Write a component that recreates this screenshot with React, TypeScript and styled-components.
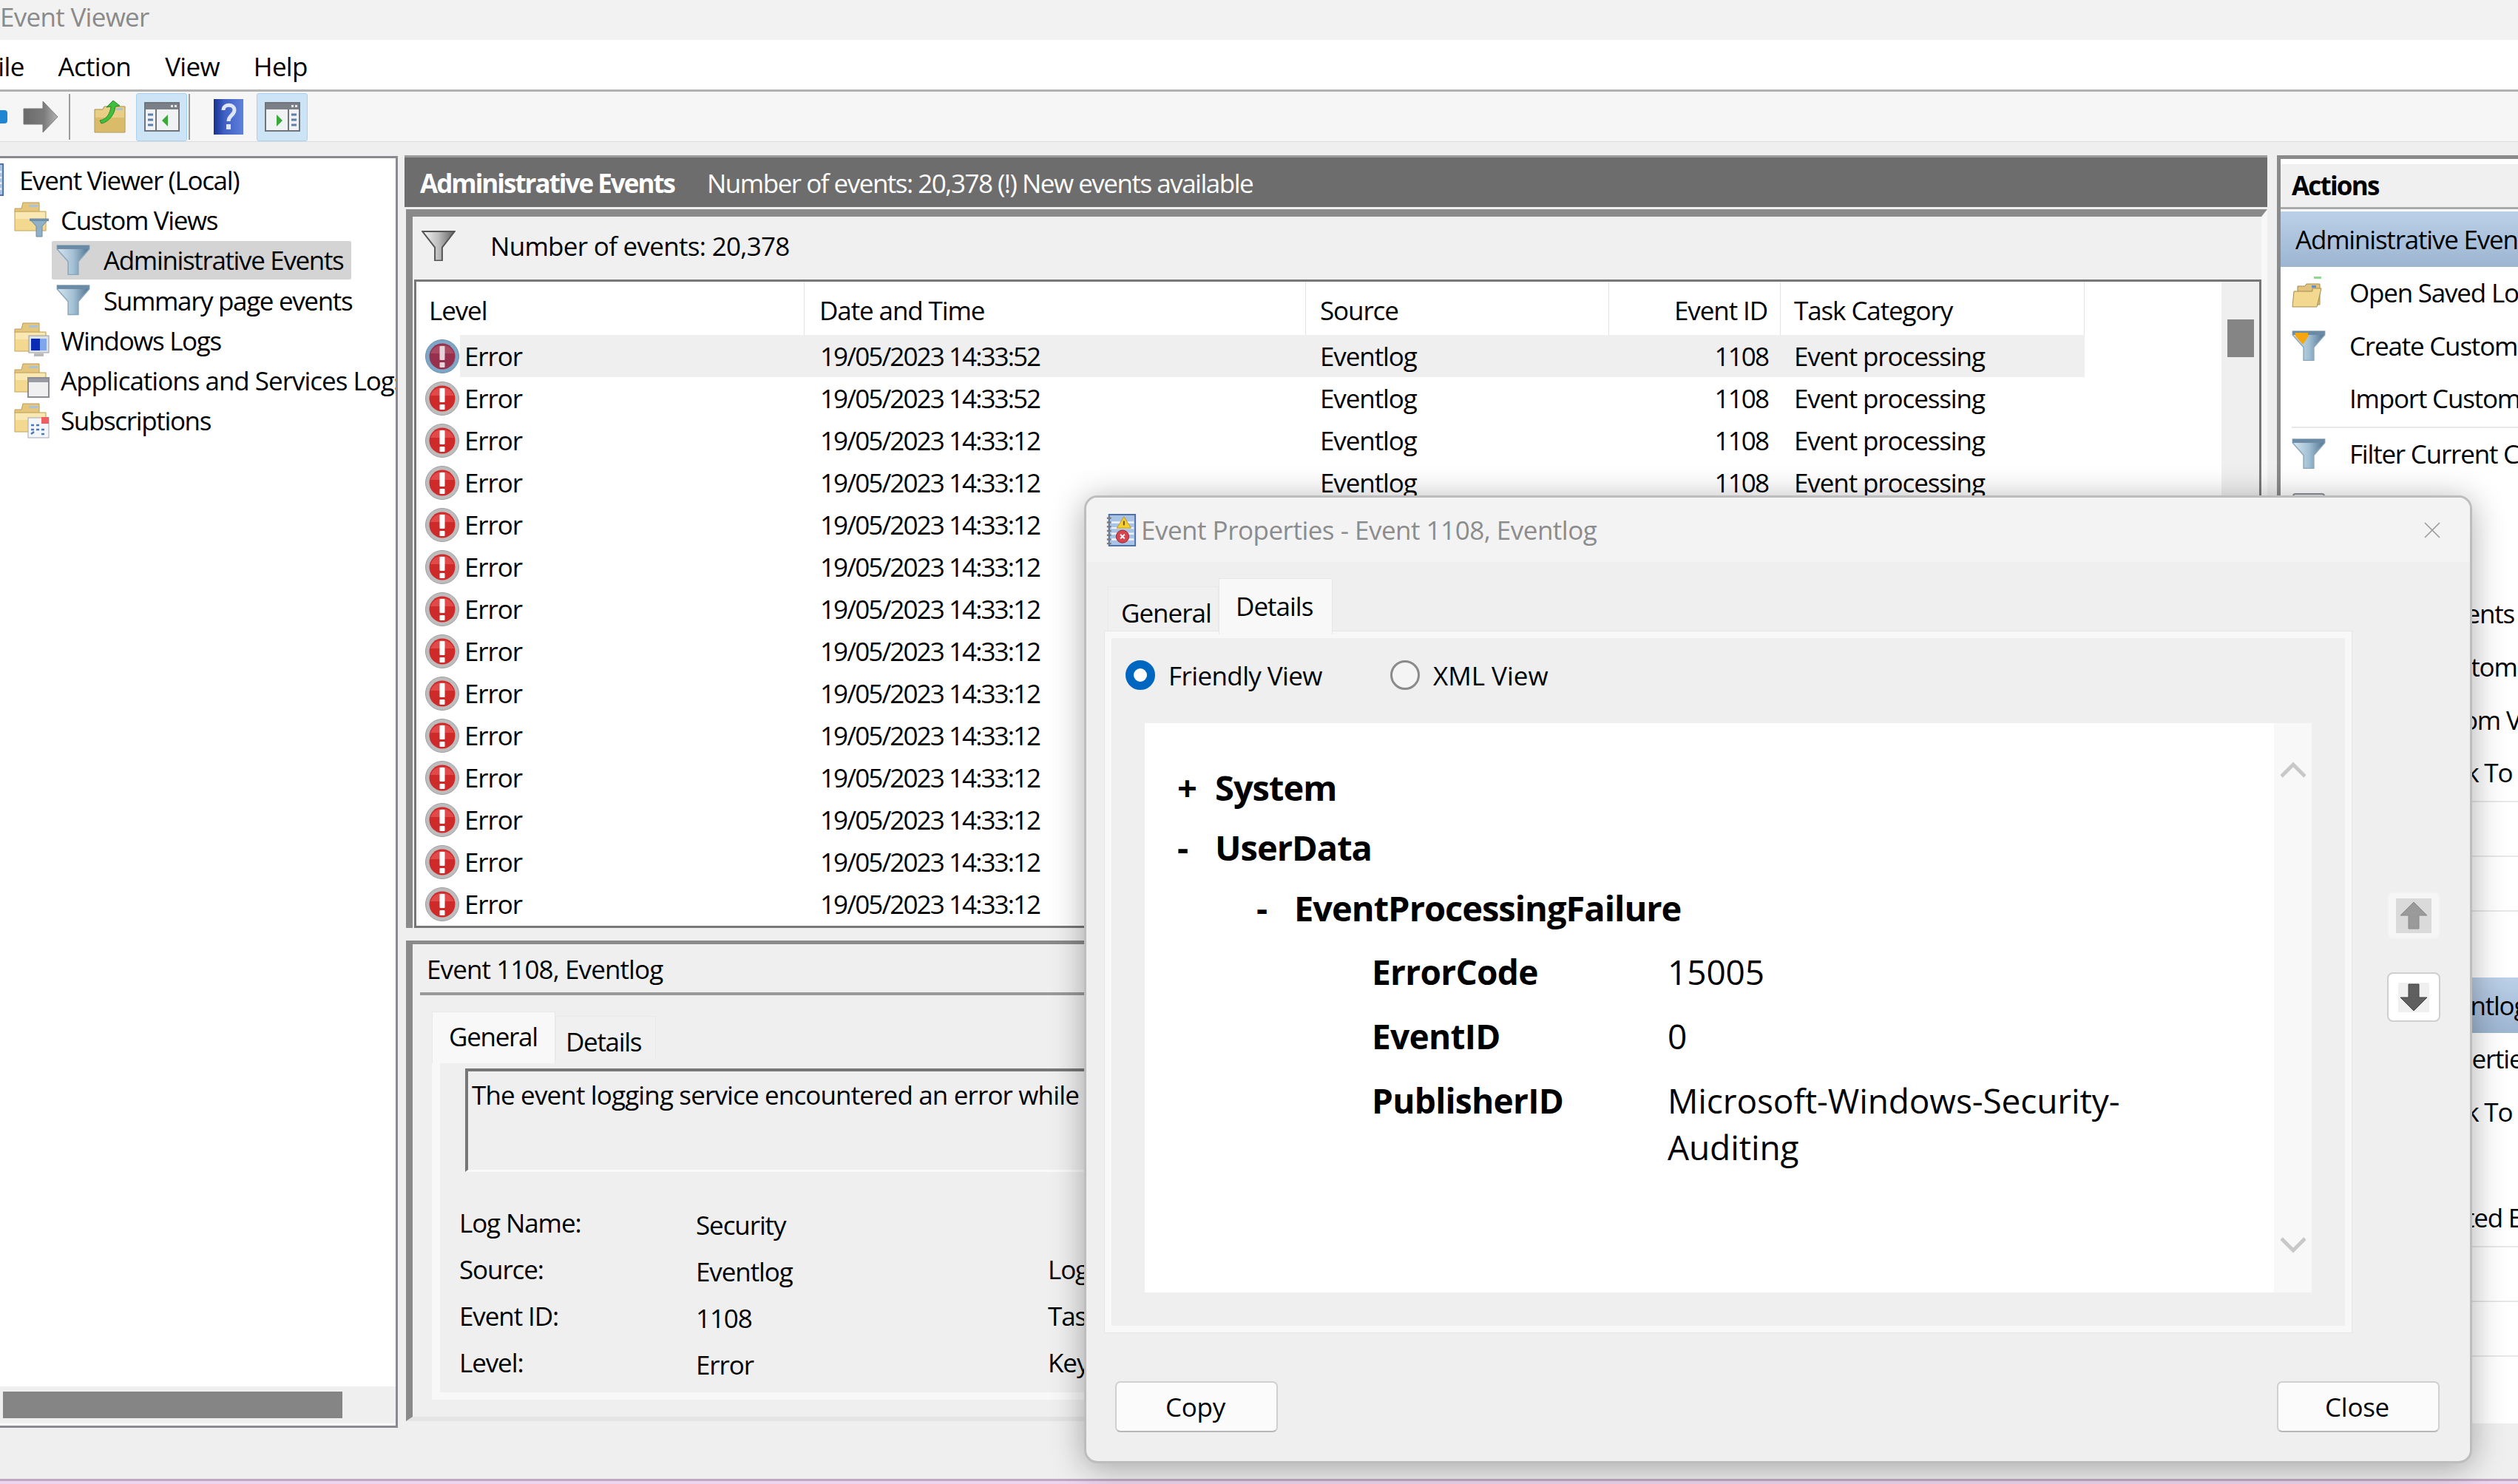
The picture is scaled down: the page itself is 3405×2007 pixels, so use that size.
import styled, { createGlobalStyle } from 'styled-components';

const GlobalStyle = createGlobalStyle`
  html, body {
    margin: 0;
    padding: 0;
    background: #efefef;
    overflow: hidden;
  }
  * {
    box-sizing: border-box;
  }
  svg {
    flex: none;
  }
`;

const rows = [
  '14:33:52', '14:33:52', '14:33:12', '14:33:12', '14:33:12', '14:33:12', '14:33:12',
  '14:33:12', '14:33:12', '14:33:12', '14:33:12', '14:33:12', '14:33:12', '14:33:12',
];

const FunnelIcon = ({ tone = 'blue', size = 46 }: { tone?: 'blue' | 'gray' | 'orange'; size?: number }) => {
  const id = `funnel-${tone}`;
  const light = tone === 'gray' ? '#f8f8f8' : '#d8e6f0';
  const dark = tone === 'gray' ? '#5f5f5f' : '#4f7290';
  const shape = tone === 'gray' ? 'M1 1H45L28 23V41H18V23Z' : 'M1 1H45V6L30 23V41H16V23L1 6Z';
  return (
    <svg width={size} height={size * 0.9} viewBox="0 0 46 42">
      <defs>
        <linearGradient id={id} x1="0" x2="1" y1="0" y2="0">
          <stop offset="0" stopColor={light} />
          <stop offset="0.5" stopColor={tone === 'gray' ? '#bdbdbd' : '#a3c0d4'} />
          <stop offset="1" stopColor={dark} />
        </linearGradient>
      </defs>
      <path d={shape} fill={`url(#${id})`} stroke={tone === 'gray' ? '#555' : '#8aa6ba'} strokeWidth={tone === 'gray' ? 2 : 1.5} />
      {tone !== 'gray' && <rect x="1" y="1" width="44" height="5" fill="#6a8aa6" />}
      {tone === 'orange' && <path d="M4 3H22V9L15 19L5 8Z" fill="#f6a60c" />}
    </svg>
  );
};

const FolderBase = () => (
  <>
    <path d="M1 9H10L12 1H34V14H1Z" fill="#e4c67e" stroke="#b99c5a" />
    <rect x="20" y="4" width="12" height="3" fill="#a9c4da" />
    <rect x="1" y="13" width="42" height="26" fill="#f3d88f" stroke="#c2a35d" />
    <rect x="2" y="14" width="40" height="9" fill="#fae8b4" />
  </>
);

const FolderIcon = ({ badge }: { badge?: 'funnel' | 'window' | 'pane' | 'calendar' }) => (
  <svg width="48" height="48" viewBox="0 0 48 48">
    <FolderBase />
    {badge === 'funnel' && (
      <g>
        <path d="M21 23H47L38 33V47H30V33Z" fill="#8fb0c6" stroke="#6a8aa2" />
        <rect x="21" y="23" width="26" height="3" fill="#6f8ea8" />
      </g>
    )}
    {badge === 'pane' && (
      <g>
        <rect x="20" y="18" width="27" height="23" fill="#dde2e8" stroke="#9a9a9a" />
        <rect x="23" y="22" width="12" height="16" fill="#0a2cb4" />
        <rect x="35" y="22" width="9" height="16" fill="#7fa6ea" />
        <rect x="27" y="42" width="13" height="4" fill="#b9b9b9" />
      </g>
    )}
    {badge === 'window' && (
      <g>
        <rect x="19" y="20" width="28" height="26" fill="#f0f0f0" stroke="#8c8c94" strokeWidth="2" />
        <rect x="20" y="21" width="26" height="5" fill="#9b9ba4" />
      </g>
    )}
    {badge === 'calendar' && (
      <g>
        <rect x="19" y="20" width="28" height="27" fill="#f3f6fa" stroke="#a4a8b2" />
        <rect x="37" y="19" width="10" height="9" fill="#ef5f5f" />
        <path d="M23 30h4M30 30h4M23 36h4M30 36h4M37 36h4M37 42h4M23 42l4-3" stroke="#4a78b8" strokeWidth="2.5" fill="none" />
      </g>
    )}
  </svg>
);

const NotebookIcon = ({ size = 44 }: { size?: number }) => (
  <svg width={size} height={size} viewBox="0 0 44 46">
    <rect x="5" y="1" width="37" height="44" fill="#a9c3e6" stroke="#4c6ea8" strokeWidth="2" />
    <path d="M8 12H40M8 20H40M8 28H40M8 36H40" stroke="#f1f5fb" strokeWidth="2.5" />
    <path d="M2 6h6M2 12h6M2 18h6M2 24h6M2 30h6M2 36h6M2 42h6" stroke="#7c7c7c" strokeWidth="2.5" />
    <path d="M26 4L36 20H16Z" fill="#f5cf2e" stroke="#b8972a" />
    <rect x="25" y="10" width="2" height="6" fill="#5a4a10" />
    <circle cx="24" cy="32" r="9" fill="#d64450" stroke="#96242e" />
    <path d="M21 29l6 6M27 29l-6 6" stroke="#fff" strokeWidth="2" />
  </svg>
);

const ErrorIcon = ({ selected }: { selected?: boolean }) => (
  <svg width="48" height="48" viewBox="0 0 48 48">
    <circle cx="24" cy="24" r="22.5" fill={selected ? '#7ea6c6' : '#bdbdbd'} stroke={selected ? '#6a90b0' : '#9e9e9e'} />
    <circle cx="24" cy="24" r="17.5" fill={selected ? '#96304c' : '#cf2a2a'} />
    <path d="M8 20a17 17 0 0 1 32 0Z" fill={selected ? '#a84a62' : '#e14a4a'} />
    <rect x="20.5" y="10" width="7" height="19" rx="1" fill={selected ? '#e6d4da' : '#fff'} />
    <rect x="20.5" y="32" width="7" height="7" rx="1" fill={selected ? '#e6d4da' : '#fff'} />
  </svg>
);

const PaneIcon = ({ side }: { side: 'left' | 'right' }) => (
  <svg width="48" height="40" viewBox="0 0 48 40">
    <rect x="1" y="1" width="46" height="38" fill="#f0f2f4" stroke="#70757c" strokeWidth="2" />
    <rect x="2" y="2" width="44" height="8" fill="#7b8088" />
    <rect x="36" y="4" width="3" height="3" fill="#e6e6e6" />
    <rect x="41" y="4" width="3" height="3" fill="#e6e6e6" />
    {side === 'left' ? (
      <g>
        <path d="M16 10V38" stroke="#70757c" strokeWidth="2" />
        <path d="M5 17h7M5 24h7M5 31h7" stroke="#5f7ea8" strokeWidth="3" />
        <path d="M32 17V33L24 25Z" fill="#3aa83a" />
      </g>
    ) : (
      <g>
        <path d="M32 10V38" stroke="#70757c" strokeWidth="2" />
        <path d="M36 17h7M36 24h7M36 31h7" stroke="#5f7ea8" strokeWidth="3" />
        <path d="M16 17V33L24 25Z" fill="#3aa83a" />
      </g>
    )}
  </svg>
);

const HelpIcon = () => (
  <svg width="40" height="48" viewBox="0 0 40 48">
    <defs>
      <linearGradient id="help-book" x1="0" x2="1" y1="0" y2="0">
        <stop offset="0" stopColor="#17318f" />
        <stop offset="0.35" stopColor="#3f5fc4" />
        <stop offset="1" stopColor="#5f80da" />
      </linearGradient>
    </defs>
    <rect width="40" height="48" fill="url(#help-book)" />
    <path d="M13 15c0-9 15-9 15 0c0 7-8 7-8 15" fill="none" stroke="#dfe6f8" strokeWidth="5" />
    <rect x="17" y="34" width="6" height="7" fill="#dfe6f8" />
  </svg>
);

const ForwardArrow = () => (
  <svg width="48" height="44" viewBox="0 0 48 44">
    <defs>
      <linearGradient id="fwd" x1="0" x2="1" y1="0" y2="0">
        <stop offset="0" stopColor="#6a6a6a" />
        <stop offset="0.6" stopColor="#7c7c7c" />
        <stop offset="1" stopColor="#b4b4b4" />
      </linearGradient>
    </defs>
    <path d="M1 11H27V1L47 22L27 43V32H1Z" fill="url(#fwd)" stroke="#7a7a7a" />
  </svg>
);

const BackDot = () => (
  <svg width="10" height="20" viewBox="0 0 10 20">
    <path d="M0 1H6Q10 1 10 5V15Q10 19 6 19H0Z" fill="#1f86d2" />
  </svg>
);

const UpFolderIcon = () => (
  <svg width="44" height="46" viewBox="0 0 44 46">
    <path d="M1 13H12L14 9H42V44H1Z" fill="#e9ce85" stroke="#a89048" />
    <rect x="2" y="24" width="39" height="19" fill="#d9bb6a" />
    <rect x="30" y="11" width="9" height="3" fill="#a9c4da" />
    <path d="M8 28C18 26 22 18 23 9L17 10L26 1L35 8L29 9C28 20 20 30 10 32Z" fill="#3fbf3f" stroke="#2a8a2a" />
  </svg>
);

const OpenFolderIcon = () => (
  <svg width="42" height="44" viewBox="0 0 42 44">
    <rect x="30" y="0" width="10" height="3" fill="#8fd88f" />
    <path d="M8 13H18L20 10H38V38H8Z" fill="#e2c27c" stroke="#a48b4c" />
    <path d="M3 20H28V16H40L34 41H1Z" fill="#f3d88f" stroke="#a48b4c" />
    <rect x="27" y="12" width="6" height="3" fill="#5a8fd0" />
  </svg>
);

const StackIcon = () => (
  <svg width="46" height="40" viewBox="0 0 46 40">
    <rect x="2" y="2" width="42" height="36" rx="3" fill="#eef0f3" stroke="#8a9098" strokeWidth="2" />
  </svg>
);

const ChevronIcon = ({ down }: { down?: boolean }) => (
  <svg width="34" height="28" viewBox="0 0 34 28">
    <path d={down ? 'M1 6L17 22L33 6' : 'M1 22L17 6L33 22'} fill="none" stroke="#c8c8c8" strokeWidth="5" />
  </svg>
);

const MoveArrow = ({ down }: { down?: boolean }) => (
  <svg width="38" height="38" viewBox="0 0 38 38">
    <path
      d={down ? 'M12 1H26V19H37L19 37L1 19H12Z' : 'M19 1L37 19H26V37H12V19H1Z'}
      fill={down ? '#5f5f5f' : '#9a9a9a'}
      stroke={down ? '#444' : '#8a8a8a'}
    />
  </svg>
);

const CloseGlyph = () => (
  <svg width="22" height="22" viewBox="0 0 22 22">
    <path d="M1 1L21 21M21 1L1 21" stroke="#9a9a9a" strokeWidth="1.6" />
  </svg>
);

const Detail = () => (
  <DetailFrame>
    <DetailTitle>Event 1108, Eventlog</DetailTitle>
    <DetailBody>
      <TabRow>
        <SmallTab $active>General</SmallTab>
        <SmallTab>Details</SmallTab>
      </TabRow>
      <GeneralPanel>
        <MessageBox>The event logging service encountered an error while processing an incoming event published from Security.</MessageBox>
        <FieldGrid>
          <FieldLabel>Log Name:</FieldLabel>
          <FieldValue>Security</FieldValue>
          <FieldLabel />
          <FieldLabel>Source:</FieldLabel>
          <FieldValue>Eventlog</FieldValue>
          <FieldLabel>Logged:</FieldLabel>
          <FieldLabel>Event ID:</FieldLabel>
          <FieldValue>1108</FieldValue>
          <FieldLabel>Task Category:</FieldLabel>
          <FieldLabel>Level:</FieldLabel>
          <FieldValue>Error</FieldValue>
          <FieldLabel>Keywords:</FieldLabel>
        </FieldGrid>
      </GeneralPanel>
    </DetailBody>
  </DetailFrame>
);

const ActionsPanel = () => (
  <Actions>
    <ActionsHead>Actions</ActionsHead>
    <SectionRow>Administrative Events</SectionRow>
    <ActionRow><ActionIcon><OpenFolderIcon /></ActionIcon>Open Saved Log...</ActionRow>
    <ActionRow><ActionIcon><FunnelIcon tone="orange" /></ActionIcon>Create Custom View...</ActionRow>
    <ActionRow $sep><ActionIcon />Import Custom View...</ActionRow>
    <ActionRow><ActionIcon><FunnelIcon /></ActionIcon>Filter Current Custom View...</ActionRow>
    <ActionRow><ActionIcon><StackIcon /></ActionIcon>Properties</ActionRow>
    <ActionRow><ActionIcon />Find...</ActionRow>
    <ActionRow><ActionIcon />Save All Events in Custom View As...</ActionRow>
    <ActionRow><ActionIcon />Export Custom View...</ActionRow>
    <ActionRow><ActionIcon />Copy Custom View...</ActionRow>
    <ActionRow $sep><ActionIcon />Attach Task To This Custom View...</ActionRow>
    <ActionRow $sep><ActionIcon />View</ActionRow>
    <ActionRow $sep><ActionIcon />Refresh</ActionRow>
    <ActionRow><ActionIcon />Help</ActionRow>
    <SectionRow $gap>Event 1108, Eventlog</SectionRow>
    <ActionRow><ActionIcon />Event Properties</ActionRow>
    <ActionRow><ActionIcon />Attach Task To This Event...</ActionRow>
    <ActionRow><ActionIcon />Copy</ActionRow>
    <ActionRow $sep><ActionIcon />Save Selected Events...</ActionRow>
    <ActionRow $sep><ActionIcon />Refresh</ActionRow>
    <ActionRow $sep><ActionIcon />Help</ActionRow>
  </Actions>
);

const PropertiesDialog = () => (
  <Dialog>
    <DialogTitle>
      <NotebookIcon />
      <DialogCaption>Event Properties - Event 1108, Eventlog</DialogCaption>
      <CloseBox><CloseGlyph /></CloseBox>
    </DialogTitle>
    <DialogBody>
      <DialogMain>
        <DialogTabs>
          <DialogTab>General</DialogTab>
          <DialogTab $active>Details</DialogTab>
        </DialogTabs>
        <DialogPanel>
          <RadioRow>
            <RadioOption $first>
              <Radio $checked />
              Friendly View
            </RadioOption>
            <RadioOption>
              <Radio />
              XML View
            </RadioOption>
          </RadioRow>
          <WhiteBox>
            <TreeArea>
              <TreeLine><Sign>+</Sign><TreeName>System</TreeName></TreeLine>
              <TreeLine><Sign>-</Sign><TreeName>UserData</TreeName></TreeLine>
              <TreeLine $nested><Sign>-</Sign><TreeName>EventProcessingFailure</TreeName></TreeLine>
              <DataGrid>
                <DataName>ErrorCode</DataName>
                <DataValue>15005</DataValue>
                <DataName>EventID</DataName>
                <DataValue>0</DataValue>
                <DataName>PublisherID</DataName>
                <DataValue>Microsoft-Windows-Security-Auditing</DataValue>
              </DataGrid>
            </TreeArea>
            <BoxScroll>
              <ChevronIcon />
              <ChevronIcon down />
            </BoxScroll>
          </WhiteBox>
        </DialogPanel>
      </DialogMain>
      <MoveColumn>
        <MoveButton $disabled><MoveFace $disabled><MoveArrow /></MoveFace></MoveButton>
        <MoveButton><MoveFace><MoveArrow down /></MoveFace></MoveButton>
      </MoveColumn>
    </DialogBody>
    <DialogFooter>
      <PushButton>Copy</PushButton>
      <PushButton>Close</PushButton>
    </DialogFooter>
  </Dialog>
);

export default function App() {
  return (
    <Page>
      <GlobalStyle />
      <TitleBar>Event Viewer</TitleBar>
      <MenuBar>
        <MenuItem>File</MenuItem>
        <MenuItem>Action</MenuItem>
        <MenuItem>View</MenuItem>
        <MenuItem>Help</MenuItem>
      </MenuBar>
      <Toolbar>
        <ToolSlot><BackDot /></ToolSlot>
        <ToolSlot $left={21}><ForwardArrow /></ToolSlot>
        <ToolSep $left={14} />
        <ToolSlot $left={32}><UpFolderIcon /></ToolSlot>
        <ToolButton $left={13}><PaneIcon side="left" /></ToolButton>
        <ToolSep $left={2} />
        <ToolSlot $left={32}><HelpIcon /></ToolSlot>
        <ToolButton $left={18}><PaneIcon side="right" /></ToolButton>
      </Toolbar>
      <Workspace>
        <TreePanel>
          <Tree>
            <TreeRow $indent={-37}><NotebookIcon /><RowGap $root />Event Viewer (Local)</TreeRow>
            <TreeRow $indent={19}><FolderIcon badge="funnel" /><RowGap />Custom Views</TreeRow>
            <TreeRow $indent={70} $selected><FunnelIcon /><RowGap $wide />Administrative Events</TreeRow>
            <TreeRow $indent={76}><FunnelIcon /><RowGap $wide />Summary page events</TreeRow>
            <TreeRow $indent={19}><FolderIcon badge="pane" /><RowGap />Windows Logs</TreeRow>
            <TreeRow $indent={19} $loose><FolderIcon badge="window" /><RowGap />Applications and Services Logs</TreeRow>
            <TreeRow $indent={19}><FolderIcon badge="calendar" /><RowGap />Subscriptions</TreeRow>
          </Tree>
          <HScroll><HThumb /></HScroll>
        </TreePanel>
        <Center>
          <CenterHead>
            <b>Administrative Events</b>
            <span>Number of events: 20,378 (!) New events available</span>
          </CenterHead>
          <ListFrame>
            <FilterBar>
              <FunnelIcon tone="gray" />
              <FilterText>Number of events: 20,378</FilterText>
            </FilterBar>
            <ListBox>
              <ListMain>
                <HeaderRow>
                  <HeadCell $width={525} $pad={17}>Level</HeadCell>
                  <HeadCell $width={678} $pad={20}>Date and Time</HeadCell>
                  <HeadCell $width={410} $pad={19}>Source</HeadCell>
                  <HeadCell $width={232} $pad={17} $end>Event ID</HeadCell>
                  <HeadCell $width={411} $pad={18}>Task Category</HeadCell>
                </HeaderRow>
                {rows.map((time, i) => (
                  <EventRow key={i}>
                    <ErrorIcon selected={i === 0} />
                    <RowCells $selected={i === 0}>
                      <Cell $width={466} $pad={6}>Error</Cell>
                      <DigitCell $width={678} $pad={21}>19/05/2023 {time}</DigitCell>
                      <Cell $width={410} $pad={19}>Eventlog</Cell>
                      <DigitCell $width={232} $pad={17} $end>1108</DigitCell>
                      <Cell $width={411} $pad={18}>Event processing</Cell>
                    </RowCells>
                  </EventRow>
                ))}
              </ListMain>
              <VScroll><VThumb /></VScroll>
            </ListBox>
          </ListFrame>
          <Detail />
        </Center>
        <ActionsPanel />
      </Workspace>
      <StatusEdge />
      <PropertiesDialog />
    </Page>
  );
}

const uiFont = `"Open Sans", "Noto Sans", "Liberation Sans", sans-serif`;

const Page = styled.div`
  position: relative;
  width: 3405px;
  height: 2007px;
  overflow: hidden;
  background: #efefef;
  font-family: ${uiFont};
  font-size: 35px;
  letter-spacing: -1.1px;
  color: #000;
`;

const TitleBar = styled.div`
  height: 54px;
  background: #f2f2f2;
  color: #8a8a8a;
  line-height: 46px;
  letter-spacing: -0.7px;
`;

const MenuBar = styled.div`
  display: flex;
  align-items: center;
  gap: 46px;
  height: 70px;
  margin-left: -20px;
  padding-top: 4px;
  background: #fff;
  border-bottom: 3px solid #b2b2b2;
`;

const MenuItem = styled.span`
  font-size: 35px;
  letter-spacing: -0.7px;
`;

const Toolbar = styled.div`
  display: flex;
  align-items: center;
  height: 68px;
  padding-top: 1px;
  background: #f6f6f6;
  border-bottom: 1px solid #dcdcdc;
`;

const ToolSlot = styled.div<{ $left?: number }>`
  display: flex;
  margin-left: ${(p) => p.$left ?? 0}px;
`;

const ToolSep = styled.div<{ $left: number }>`
  width: 2px;
  height: 62px;
  margin-left: ${(p) => p.$left}px;
  background: #9c9c9c;
`;

const ToolButton = styled.div<{ $left: number }>`
  display: flex;
  align-items: center;
  justify-content: center;
  width: 69px;
  height: 65px;
  margin-left: ${(p) => p.$left}px;
  background: #cde4f7;
  border: 1px solid #a9d1f2;
  border-radius: 3px;
`;

const Workspace = styled.div`
  display: flex;
  height: 1808px;
`;

const TreePanel = styled.div`
  display: flex;
  flex-direction: column;
  justify-content: space-between;
  flex: none;
  width: 538px;
  height: 1720px;
  margin-top: 19px;
  padding-bottom: 3px;
  background: #fff;
  border-top: 3px solid #8a8a92;
  border-right: 3px solid #8a8a92;
  border-bottom: 3px solid #8a8a92;
  overflow: hidden;
`;

const Tree = styled.div`
  padding-top: 2px;
  letter-spacing: -1.35px;
`;

const TreeRow = styled.div<{ $indent: number; $selected?: boolean; $loose?: boolean }>`
  display: flex;
  align-items: center;
  width: ${(p) => (p.$selected ? '405px' : 'auto')};
  height: ${(p) => (p.$selected ? '52px' : '54.3px')};
  margin: ${(p) => (p.$selected ? '1px' : '0')} 0 ${(p) => (p.$selected ? '1.3px' : '0')} ${(p) => p.$indent}px;
  padding-left: ${(p) => (p.$selected ? '6px' : '0')};
  background: ${(p) => (p.$selected ? '#d4d4d4' : 'transparent')};
  border-radius: 2px;
  white-space: nowrap;
  letter-spacing: ${(p) => (p.$loose ? '-1px' : 'inherit')};
`;

const RowGap = styled.span<{ $wide?: boolean; $root?: boolean }>`
  flex: none;
  width: ${(p) => (p.$root ? '19px' : p.$wide ? '18px' : '15px')};
`;

const HScroll = styled.div`
  height: 50px;
  padding: 7px 0 7px 4px;
  background: #efefef;
`;

const HThumb = styled.div`
  width: 459px;
  height: 36px;
  background: #858585;
`;

const Center = styled.div`
  display: flex;
  flex-direction: column;
  flex: none;
  width: 2519px;
  height: 1715px;
  margin: 18px 0 0 9px;
`;

const CenterHead = styled.div`
  display: flex;
  align-items: center;
  gap: 44px;
  height: 70px;
  padding: 2px 0 0 21px;
  background: #6d6d6d;
  border-top: 3px solid #9a9a9a;
  color: #fff;
  white-space: nowrap;
  letter-spacing: -1.5px;

  b {
    font-weight: 700;
    font-size: 35px;
    letter-spacing: -2px;
  }
`;

const ListFrame = styled.div`
  display: flex;
  flex-direction: column;
  margin: 3px 0 0 2px;
  border-style: solid;
  border-width: 10px 8px 0 9px;
  border-color: #8a8a8a #f8f8f8 #f8f8f8 #8a8a8a;
`;

const FilterBar = styled.div`
  display: flex;
  align-items: center;
  height: 85px;
  padding: 0 0 6px 12px;
  background: #f0f0f0;
`;

const FilterText = styled.span`
  margin-left: 47px;
  letter-spacing: -0.7px;
`;

const ListBox = styled.div`
  display: flex;
  height: 877px;
  margin-left: 2px;
  background: #fff;
  border: 3px solid #777;
  overflow: hidden;
`;

const ListMain = styled.div`
  flex: 1;
  min-width: 0;
  overflow: hidden;
`;

const HeaderRow = styled.div`
  display: flex;
  height: 72px;
  align-items: center;
`;

const HeadCell = styled.div<{ $width: number; $pad: number; $end?: boolean }>`
  flex: none;
  width: ${(p) => p.$width}px;
  height: 100%;
  padding: 15px ${(p) => (p.$end ? p.$pad : 0)}px 0 ${(p) => (p.$end ? 0 : p.$pad)}px;
  border-right: 1px solid #e4e4e4;
  text-align: ${(p) => (p.$end ? 'right' : 'left')};
`;

const EventRow = styled.div`
  display: flex;
  align-items: center;
  height: 57px;
  padding-left: 11px;
`;

const RowCells = styled.div<{ $selected?: boolean }>`
  display: flex;
  align-items: center;
  height: 57px;
  background: ${(p) => (p.$selected ? '#efefef' : 'transparent')};
`;

const Cell = styled.div<{ $width: number; $pad: number; $end?: boolean }>`
  flex: none;
  width: ${(p) => p.$width}px;
  padding: 0 ${(p) => (p.$end ? p.$pad : 0)}px 0 ${(p) => (p.$end ? 0 : p.$pad)}px;
  text-align: ${(p) => (p.$end ? 'right' : 'left')};
  white-space: nowrap;
`;

const DigitCell = styled(Cell)`
  letter-spacing: -1.9px;
`;

const VScroll = styled.div`
  flex: none;
  width: 51px;
  padding: 51px 7px 0 8px;
  background: #efefef;
`;

const VThumb = styled.div`
  width: 36px;
  height: 51px;
  background: #858585;
`;

const DetailFrame = styled.div`
  display: flex;
  flex-direction: column;
  height: 650px;
  margin: 17px 0 0 2px;
  border-style: solid;
  border-width: 5px 0 6px 9px;
  border-color: #8a8a8a #f8f8f8 #e4e4e4 #8a8a8a;
  overflow: hidden;
`;

const DetailTitle = styled.div`
  height: 69px;
  margin-left: 10px;
  padding: 10px 0 0 9px;
  border-bottom: 4px solid #999;
  letter-spacing: -0.9px;
`;

const DetailBody = styled.div`
  padding: 22px 0 0 26px;
`;

const TabRow = styled.div`
  display: flex;
  align-items: flex-end;
  height: 70px;
`;

const SmallTab = styled.div<{ $active?: boolean }>`
  align-self: ${(p) => (p.$active ? 'flex-start' : 'center')};
  width: ${(p) => (p.$active ? '167px' : '136px')};
  height: ${(p) => (p.$active ? '70px' : '59px')};
  padding: ${(p) => (p.$active ? '9px 0 0 22px' : '10px 0 0 13px')};
  background: ${(p) => (p.$active ? '#f8f8f8' : '#f0f0f0')};
  border: 1px solid #e8e8e8;
  border-bottom: none;
  letter-spacing: -1.3px;
`;

const GeneralPanel = styled.div`
  width: 2446px;
  height: 460px;
  margin-top: -5px;
  padding: 12px 30px 0 34px;
  background: #efefef;
  border-left: 11px solid #f8f8f8;
  border-bottom: 10px solid #f8f8f8;
`;

const MessageBox = styled.div`
  height: 140px;
  padding: 8px 0 0 5px;
  border-top: 4px solid #777;
  border-left: 4px solid #777;
  border-bottom: 3px solid #fafafa;
  white-space: nowrap;
  overflow: hidden;
  letter-spacing: -0.85px;
`;

const FieldGrid = styled.div`
  display: grid;
  grid-template-columns: 320px 476px 400px;
  grid-auto-rows: 63px;
  align-items: center;
  margin: 37px 0 0 -8px;
`;

const FieldLabel = styled.div``;

const FieldValue = styled.div`
  padding-top: 5px;
`;

const Actions = styled.div`
  flex: none;
  width: 340px;
  height: 1715px;
  margin: 18px 0 0 13px;
  background: #fff;
  border-top: 5px solid #8a8a8a;
  border-left: 5px solid #8a8a8a;
  white-space: nowrap;
  overflow: hidden;
  letter-spacing: -1.2px;
`;

const ActionsHead = styled.div`
  height: 61px;
  padding: 5px 0 0 15px;
  margin-top: 7px;
  background: #f0f0f0;
  border-bottom: 3px solid #aaa;
  font-weight: 700;
  letter-spacing: -1.8px;
`;

const SectionRow = styled.div<{ $gap?: boolean }>`
  display: flex;
  align-items: center;
  height: 75px;
  margin-top: ${(p) => (p.$gap ? '17px' : '3px')};
  padding-left: 20px;
  background: linear-gradient(#bbd0e8, #9db5d1);
`;

const ActionRow = styled.div<{ $sep?: boolean }>`
  display: flex;
  align-items: center;
  height: ${(p) => (p.$sep ? '74px' : '72px')};
  margin-left: 15px;
  padding-bottom: ${(p) => (p.$sep ? '5px' : '3px')};
  border-bottom: ${(p) => (p.$sep ? '2px solid #e8e8e8' : 'none')};
`;

const ActionIcon = styled.div`
  display: flex;
  flex: none;
  width: 78px;
`;

const StatusEdge = styled.div`
  height: 7px;
  background: #ecd5ef;
  border-top: 3px solid #bfa8c0;
`;

const Dialog = styled.div`
  position: absolute;
  left: 1466px;
  top: 670px;
  width: 1877px;
  height: 1309px;
  display: flex;
  flex-direction: column;
  background: #efefef;
  border: 3px solid #bdbdbd;
  border-radius: 18px;
  box-shadow: 0 6px 45px rgba(0, 0, 0, 0.32);
  overflow: hidden;
`;

const DialogTitle = styled.div`
  display: flex;
  align-items: center;
  height: 87px;
  padding: 0 0 0 25px;
  background: #f3f3f3;
`;

const DialogCaption = styled.span`
  margin-left: 5px;
  color: #8c8c8c;
  letter-spacing: -0.5px;
`;

const CloseBox = styled.div`
  display: flex;
  margin-left: auto;
  margin-right: 40px;
`;

const DialogBody = styled.div`
  display: flex;
  padding: 27px 0 0 24px;
`;

const DialogMain = styled.div`
  flex: none;
  width: 1688px;
`;

const DialogTabs = styled.div`
  display: flex;
  align-items: flex-end;
  height: 66px;
  padding-left: 5px;
`;

const DialogTab = styled.div<{ $active?: boolean }>`
  position: relative;
  width: ${(p) => (p.$active ? '154px' : '150px')};
  height: ${(p) => (p.$active ? '76px' : '60px')};
  margin-bottom: ${(p) => (p.$active ? '-5px' : '0')};
  padding: ${(p) => (p.$active ? '13px 0 0 22px' : '11px 0 0 17px')};
  background: ${(p) => (p.$active ? '#f8f8f8' : '#f0f0f0')};
  border: 1px solid #e8e8e8;
  border-bottom: none;
  letter-spacing: -1px;
`;

const DialogPanel = styled.div`
  height: 950px;
  padding: 0 45px;
  background: #efefef;
  border: 10px solid #f8f8f8;
  outline: 1px solid #e6e6e6;
  outline-offset: -1px;
`;

const RadioRow = styled.div`
  display: flex;
  align-items: center;
  height: 100px;
  margin: 0 0 15px -26px;
  letter-spacing: -0.6px;
`;

const RadioOption = styled.label<{ $first?: boolean }>`
  display: flex;
  align-items: center;
  gap: 18px;
  width: ${(p) => (p.$first ? '358px' : 'auto')};
  letter-spacing: ${(p) => (p.$first ? 'inherit' : '0')};
`;

const Radio = styled.span<{ $checked?: boolean }>`
  flex: none;
  width: 40px;
  height: 40px;
  border-radius: 50%;
  background: ${(p) => (p.$checked ? '#fff' : '#f4f4f4')};
  border: ${(p) => (p.$checked ? '11px solid #0067c0' : '3px solid #8a8a8a')};
`;

const WhiteBox = styled.div`
  display: flex;
  height: 770px;
  background: #fff;
`;

const TreeArea = styled.div`
  flex: 1;
  padding: 46px 0 0 44px;
`;

const TreeLine = styled.div<{ $nested?: boolean }>`
  display: flex;
  align-items: center;
  height: 81.5px;
  padding-left: ${(p) => (p.$nested ? '107px' : '0')};
  font-size: 47px;
  font-weight: 700;
  letter-spacing: -1px;
`;

const Sign = styled.span`
  flex: none;
  width: 51px;
`;

const TreeName = styled.span``;

const DataGrid = styled.div`
  display: grid;
  grid-template-columns: 400px 640px;
  grid-auto-rows: minmax(87px, auto);
  margin: 2px 0 0 263px;
  font-size: 46px;
  line-height: 63px;
  letter-spacing: -0.1px;
`;

const DataName = styled.div`
  padding-top: 12px;
  font-weight: 700;
  letter-spacing: -0.7px;
`;

const DataValue = styled.div`
  padding-top: 12px;
`;

const BoxScroll = styled.div`
  display: flex;
  flex-direction: column;
  align-items: center;
  justify-content: space-between;
  flex: none;
  width: 51px;
  padding: 50px 0 51px;
  background: #f8f8f8;
`;

const MoveColumn = styled.div`
  display: flex;
  flex-direction: column;
  gap: 45px;
  margin: 419px 0 0 47px;
`;

const MoveButton = styled.div<{ $disabled?: boolean }>`
  display: flex;
  align-items: center;
  justify-content: center;
  width: 72px;
  height: ${(p) => (p.$disabled ? '64px' : '67px')};
  background: ${(p) => (p.$disabled ? '#f6f6f6' : '#fff')};
  border: 2px solid ${(p) => (p.$disabled ? '#f2f2f2' : '#cfcfcf')};
  border-radius: 8px;
`;

const MoveFace = styled.div<{ $disabled?: boolean }>`
  display: flex;
  align-items: center;
  justify-content: center;
  width: ${(p) => (p.$disabled ? '48px' : '42px')};
  height: ${(p) => (p.$disabled ? '47px' : '40px')};
  background: ${(p) => (p.$disabled ? '#dadada' : '#f0f0f0')};
`;

const DialogFooter = styled.div`
  display: flex;
  justify-content: space-between;
  margin-top: 65px;
  padding: 0 41px 0 39px;
`;

const PushButton = styled.div`
  display: flex;
  align-items: center;
  justify-content: center;
  width: 220px;
  height: 69px;
  padding-right: 3px;
  background: #fbfbfb;
  border: 2px solid #d0d0d0;
  border-bottom-color: #b8b8b8;
  border-radius: 7px;
  letter-spacing: -0.3px;
`;
